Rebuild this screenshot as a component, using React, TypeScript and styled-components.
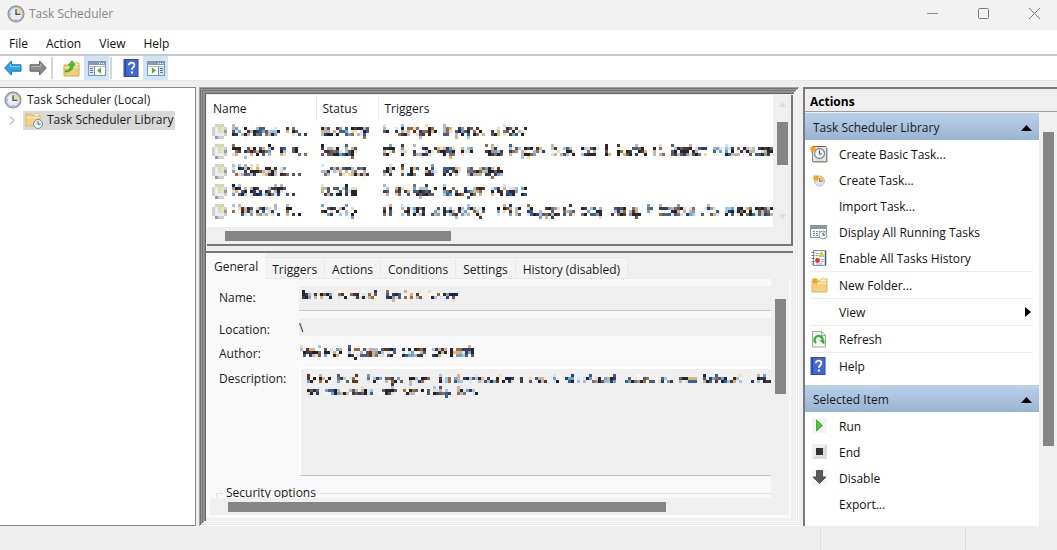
import React from "react";
import styled, { createGlobalStyle } from "styled-components";

const Global = createGlobalStyle`
  *, *::before, *::after { box-sizing: border-box; }
  html, body { margin: 0; padding: 0; overflow: hidden; }
  body, button, input, textarea {
    font-family: "Open Sans", "Noto Sans", sans-serif;
    font-size: 12px;
    line-height: 16px;
    color: #1a1a1a;
  }
`;

/* ---------- redacted text, drawn as a coarse mosaic ---------- */

const DARKS = ["#1d2433", "#3b2326", "#2c3e6e", "#5b3527", "#9a6a40", "#5d5d62", "#35609c", "#22242c"];
const LIGHTS = ["#d9b27c", "#9cc7ea", "#c9e9fb", "#f3d9b4", "#fff6dc", "#b7b7bb", "#6aa3d8", "#e9fbff"];

const noise = (a: number, b: number, seed: number) => {
  const v = Math.sin(a * 127.1 + b * 311.7 + seed * 74.7) * 43758.5453;
  return v - Math.floor(v);
};

/* shape: l = tall letter, x = low letter, g = letter with a tail, . = dot, space = gap */
function Mosaic({ shape, seed, mid = 3 }: { shape: string; seed: number; mid?: number }) {
  const cell = 3;
  const rows = mid + 2;
  const cells: React.ReactNode[] = [];
  const put = (c: number, r: number, fill: string) =>
    cells.push(<rect key={`${c}-${r}`} x={c * cell} y={r * cell} width={cell} height={cell} fill={fill} />);
  shape.split("").forEach((ch, i) => {
    if (ch === " ") return;
    for (let k = 0; k < 2; k++) {
      const c = i * 2 + k;
      for (let r = 0; r < rows; r++) {
        const n = noise(c, r, seed);
        const m = noise(r, c, seed + 9);
        if (ch === ".") {
          if (r === mid && k === 0) put(c, r, DARKS[Math.floor(m * 8)]);
          continue;
        }
        const low = r > 0 && r <= mid;
        const top = r === 0 && ch === "l" && k === 0;
        const tail = r === mid + 1 && ch === "g" && k === 0;
        if (!low && !top && !tail) continue;
        if (low && n < (k ? 0.34 : 0.12)) continue;
        const dark = low ? n > 0.58 : n > 0.75;
        put(c, r, (dark ? DARKS : LIGHTS)[Math.floor(m * 8)]);
      }
    }
  });
  return (
    <MosaicSvg width={shape.length * 2 * cell} height={rows * cell} shapeRendering="crispEdges" aria-hidden="true">
      {cells}
    </MosaicSvg>
  );
}

const MosaicSvg = styled.svg`
  display: block;
  flex: none;
`;

/* ---------- icons ---------- */

const Icon = styled.svg`
  display: block;
  flex: none;
`;

const ClockIcon = ({ size = 18 }: { size?: number }) => (
  <Icon width={size} height={size} viewBox="0 0 18 18">
    <circle cx="9" cy="9" r="8.5" fill="#85888c" />
    <circle cx="9" cy="9" r="7.600" fill="#b9bcc0" />
    <circle cx="9" cy="9" r="6" fill="#e4eef8" />
    <path d="M9 9V3a6 6 0 0 1 6 6z" fill="#f6d79a" />
    <path d="M9 4.200V9.400H13.400" fill="none" stroke="#47566b" strokeWidth="1.400" />
    <path d="M9 14v1M3 9h1" stroke="#7d8792" strokeWidth="1" />
  </Icon>
);

const ArrowIcon = ({ forward }: { forward?: boolean }) => (
  <Icon width="18" height="16" viewBox="0 0 18 16">
    <path
      d={forward ? "M17.300 8 10.600 1V4.800H1v6.400h9.600V15z" : "M.7 8 7.400 1V4.800H17v6.400H7.400V15z"}
      fill={forward ? "#8b8b8b" : "#2fa4e7"}
      stroke={forward ? "#5f5f5f" : "#1873b5"}
      strokeWidth="1"
    />
    <path d={forward ? "M2 6.500h9.500V4" : "M16 6.500H6.500V4"} fill="none" stroke={forward ? "#b5b5b5" : "#7fd0fa"} />
  </Icon>
);

const FolderUpIcon = () => (
  <Icon width="17" height="17" viewBox="0 0 17 17">
    <path d="M1 5h8l1-2h6v13H1z" fill="#f0cf7c" stroke="#d0a850" />
    <path d="M10 3.500h5.500v2h-5.500z" fill="#f9e6ae" />
    <path d="M1.500 7.500h14" stroke="#fbe9b4" />
    <path d="M2.500 10.500C6 10.500 7.500 8.500 7.500 5H5.500L9 .8 12 5h-1.700c0 4.500-3 7-7.800 7z" fill="#44c62f" stroke="#2c9a1c" strokeWidth=".7" />
  </Icon>
);

const PaneIcon = ({ right }: { right?: boolean }) => (
  <Icon width="18" height="16" viewBox="0 0 18 16">
    <rect x=".5" y="1.500" width="17" height="14" fill="#fff" stroke="#8b95a0" />
    <rect x="1" y="2" width="16" height="3" fill="#8e9aa8" />
    <path d="M11 3.500h1M13 3.500h1M15 3.500h1" stroke="#fff" />
    <path d="M1 6.500h16" stroke="#bcc5cf" />
    {right ? (
      <>
        <rect x="11.500" y="7" width="5.500" height="8" fill="#dbe6f2" />
        <path d="M11.500 6v9" stroke="#8b95a0" />
        <path d="M13 8.500h3M13 10.500h3M13 12.500h3" stroke="#4a7dbd" />
        <path d="M5 7.500v6l4-3z" fill="#3dbb2e" />
      </>
    ) : (
      <>
        <rect x="1" y="7" width="5.500" height="8" fill="#dbe6f2" />
        <path d="M6.500 6v9" stroke="#8b95a0" />
        <path d="M2 8.500h3M2 10.500h3M2 12.500h3" stroke="#4a7dbd" />
        <path d="M13 7.500v6l-4-3z" fill="#3dbb2e" />
      </>
    )}
  </Icon>
);

const HelpIcon = () => (
  <Icon width="16" height="18" viewBox="0 0 16 18">
    <rect x="1" y=".5" width="14" height="17" fill="#4468d2" stroke="#2c4bab" />
    <path d="M2.500 1v16" stroke="#294796" />
    <path d="M6 6.200c0-3.400 5.400-3.400 5.400-.2 0 2.200-2.500 2.300-2.500 4.700" fill="none" stroke="#fff" strokeWidth="1.800" />
    <rect x="7.900" y="12.500" width="2" height="2" fill="#fff" />
  </Icon>
);

const FolderClockIcon = () => (
  <Icon width="18" height="17" viewBox="0 0 18 17">
    <path d="M1 2h5l1 1.500h8V14H1z" fill="#f5d386" stroke="#dcb766" />
    <path d="M9 2h5v2H9z" fill="#fff" stroke="#d5b56e" strokeWidth=".6" />
    <path d="M1.500 5.500h13" stroke="#fdeebd" />
    <circle cx="13" cy="12" r="4.500" fill="#e8f1f8" stroke="#7e8a96" />
    <path d="M13 9.200V12.200h2.500" fill="none" stroke="#4b5c70" />
  </Icon>
);

const Star = () => (
  <path d="M4.500 0 5.600 2.400 8.500 1.500 7.300 4 9.500 5.500 7 6.300 7 9 4.800 7.300 2.500 9 2.600 6.300 0 5.400 2.200 4 1 1.500 3.600 2.400z" fill="#f7a520" />
);

const BasicTaskIcon = () => (
  <Icon width="18" height="18" viewBox="0 0 18 18">
    <path d="M2.500 1.500h13l1 1v14h-14z" fill="#e6e3e1" stroke="#8f8580" />
    <path d="M3 1.500h13" stroke="#a9483a" />
    <path d="M17 3v14H3" fill="none" stroke="#8c8c8c" />
    <circle cx="9.500" cy="8.500" r="5" fill="#eef6fb" stroke="#7f8f9b" strokeWidth="1.300" />
    <path d="M9.500 5.500V9H12" fill="none" stroke="#41566b" strokeWidth="1.200" />
    <g transform="translate(-1 0) scale(.85)"><Star /></g>
  </Icon>
);

const TaskIcon = () => (
  <Icon width="18" height="18" viewBox="0 0 18 18">
    <circle cx="9.500" cy="10" r="5" fill="#dbe8f2" stroke="#b4bfc8" />
    <path d="M9.500 10V5a5 5 0 0 1 5 5z" fill="#f4c466" />
    <path d="M9.500 7v3.300h3" fill="none" stroke="#6c7d90" />
    <g transform="translate(2 3) scale(.85)"><Star /></g>
  </Icon>
);

const RunningIcon = () => (
  <Icon width="18" height="18" viewBox="0 0 18 18">
    <rect x=".5" y="2.500" width="16" height="12" fill="#fff" stroke="#8793a0" />
    <rect x="1" y="3" width="15" height="3" fill="#8896a6" />
    <path d="M3 8.500h9M3 10.500h7M3 12.500h6" stroke="#7f90a4" strokeDasharray="2 1" />
    <circle cx="13" cy="12" r="4" fill="#edf4f7" stroke="#8c9aa5" />
    <path d="M13 12V8.500a3.500 3.500 0 0 1 3 3.500z" fill="#cfe3a4" />
    <path d="M13 9.700v2.500h2" fill="none" stroke="#4b5c70" />
  </Icon>
);

const HistoryIcon = () => (
  <Icon width="18" height="18" viewBox="0 0 18 18">
    <rect x="3.500" y="1.500" width="12" height="15" fill="#fff" stroke="#7f90b5" />
    <path d="M15.500 2v14" stroke="#3756a0" strokeWidth="1.500" />
    <path d="M1.500 3.500h3M1.500 6.500h3M1.500 9.500h3M1.500 12.500h3M1.500 15h3" stroke="#6d7580" />
    <path d="M5.500 4.500h4M5.500 6.500h3M11 10.500h3M11 12.500h3M6 15h7" stroke="#8fa9d8" />
    <path d="M11.500 2.500 14 7.500H9z" fill="#f3c81e" stroke="#d4a50d" strokeWidth=".6" />
    <circle cx="7.500" cy="11.500" r="2.400" fill="#dc3327" />
  </Icon>
);

const NewFolderIcon = () => (
  <Icon width="18" height="18" viewBox="0 0 18 18">
    <path d="M2 5h8l1-2h6v13H2z" fill="#f3d080" stroke="#dcb35e" />
    <path d="M11 3.500h5v2h-6z" fill="#fff3cf" />
    <path d="M2.500 7.500h14" stroke="#fdedb8" />
    <g transform="translate(1 1) scale(.85)"><Star /></g>
  </Icon>
);

const RefreshIcon = () => (
  <Icon width="18" height="18" viewBox="0 0 18 18">
    <path d="M2.500 1.500h9l4 3.500v12h-13z" fill="#f5f6f5" stroke="#a3a8a3" />
    <path d="M11.500 1.500v4h4" fill="none" stroke="#a3a8a3" />
    <path d="M6 13A4 4 0 1 1 12.500 11" fill="none" stroke="#2fb32c" strokeWidth="2.200" />
    <path d="M9 10.500h5.500v4z" fill="#2fb32c" />
  </Icon>
);

const RunIcon = () => (
  <Icon width="18" height="18" viewBox="0 0 18 18">
    <rect x="2" y="1" width="15" height="15" fill="#f4f4f4" />
    <path d="M6.500 3v11l6-5.500z" fill="#4cc83a" stroke="#2f9e22" strokeWidth=".8" />
  </Icon>
);

const EndIcon = () => (
  <Icon width="18" height="18" viewBox="0 0 18 18">
    <rect x="2" y="1" width="15" height="15" fill="#dcdcdc" />
    <path d="M2 1h15L2 16z" fill="#f0f0f0" />
    <rect x="6" y="5" width="7" height="7" fill="#333" />
  </Icon>
);

const DisableIcon = () => (
  <Icon width="18" height="18" viewBox="0 0 18 18">
    <rect x="2" y="1" width="15" height="15" fill="#f4f4f4" />
    <path d="M6.500 1.500h6V8H16l-6.500 6.500L3 8h3.500z" fill="#5a5a5a" stroke="#3c3c3c" strokeWidth=".8" />
  </Icon>
);

const RowClock = () => (
  <Icon width="16" height="15" viewBox="0 0 16 15" shapeRendering="crispEdges">
    <path d="M3 0h9v3h3v9h-3v3H3v-3H0V3h3z" fill="#cfcfcf" />
    <path d="M3 3h9v9H3z" fill="#eceef0" />
    <path d="M6 0h3v6H6z" fill="#c5e79a" />
    <path d="M9 3h3v6H9z" fill="#e8e6ae" />
    <path d="M12 6h3v3h-3zM3 12h3v3H3z" fill="#9a9a9a" />
    <path d="M6 6h3v3H6z" fill="#d3dae0" />
  </Icon>
);

/* ---------- window shell ---------- */

const Window = styled.div`
  display: flex;
  flex-direction: column;
  height: 100vh;
  background: #efefef;
  white-space: nowrap;
`;

const TitleBar = styled.header`
  display: flex;
  align-items: center;
  height: 30px;
  padding: 0 0 3px 7px;
  gap: 4px;
  background: #f2f2f2;
  color: #868686;
`;

const Title = styled.h1`
  flex: 1;
  margin: 0;
  font-size: 12px;
  font-weight: 400;
`;

const CaptionButton = styled.button`
  display: grid;
  place-items: center;
  width: 51px;
  height: 26px;
  padding: 0;
  border: 0;
  background: none;
`;

const Captions = styled.div`
  display: flex;
  margin-right: -3px;
`;

const MenuBar = styled.nav`
  display: flex;
  height: 26px;
  padding: 0 9px;
  gap: 18px;
  background: #fff;
  border-bottom: 2px solid #c9c9c9;
`;

const MenuButton = styled.button`
  padding: 4px 0 0;
  border: 0;
  background: none;
  color: #111;
`;

const Toolbar = styled.div`
  display: flex;
  align-items: center;
  height: 25px;
  background: #fff;
  border-bottom: 1px solid #e6e6e6;
`;

const ToolButton = styled.button<{ $on?: boolean }>`
  display: grid;
  place-items: center;
  width: 25px;
  height: 24px;
  padding: 0;
  border: 0;
  background: ${(p) => (p.$on ? "#cbe6fa" : "none")};
`;

const ToolSeparator = styled.span`
  width: 2px;
  height: 22px;
  margin: 0 6px 0 1px;
  background: #d6d6d6;
`;

const Main = styled.main`
  display: flex;
  flex: 1;
  min-height: 0;
  padding-top: 6px;
`;

/* ---------- tree ---------- */

const TreePane = styled.aside`
  flex: 0 0 196px;
  padding: 2px 0;
  background: #fff;
  border: solid #828790;
  border-width: 1px 1px 1px 0;
`;

const TreeRow = styled.div<{ $child?: boolean }>`
  display: flex;
  align-items: center;
  height: 20px;
  padding-left: ${(p) => (p.$child ? 9 : 4)}px;
  gap: 5px;
`;

const TreeItem = styled.span`
  display: flex;
  align-items: center;
  gap: 4px;
  height: 19px;
  margin-left: 3px;
  padding: 0 2px;
  background: #d9d9d9;
`;

/* ---------- centre ---------- */

const Centre = styled.section`
  display: flex;
  flex-direction: column;
  flex: 1;
  min-width: 0;
  margin-left: 3px;
  padding: 8px 6px 8px 8px;
  background: #efefef;
  box-shadow:
    inset 1px 1px #a2a2a2, inset -1px -1px #fbfbfb,
    inset 2px 2px #707070, inset -2px -2px #e6e6e6,
    inset 3px 3px #9a9a9a, inset -3px -3px #fbfbfb,
    inset 4px 4px #747474, inset -4px -4px #e9e9e9,
    inset 5px 5px #969696, inset -5px -5px #f6f6f6,
    inset 6px 6px #8a8a8a,
    inset 7px 7px #666;
`;

const ListPane = styled.div`
  flex: none;
  border: solid #777;
  border-width: 0 2px 2px 0;
  background: #efefef;
`;

const ListBody = styled.div`
  display: flex;
  height: 132px;
`;

const TableClip = styled.div`
  flex: 1;
  min-width: 0;
  overflow: hidden;
  background: #fff;
`;

const TaskTable = styled.table`
  width: 100%;
  table-layout: fixed;
  border-collapse: collapse;
  text-align: left;

  th {
    height: 26px;
    padding: 2px 0 0 6px;
    font-weight: 400;
    border-right: 1px solid #ececec;
  }
  th:last-child { border-right: 0; }
  td {
    height: 20px;
    padding: 0 0 0 5px;
    overflow: hidden;
  }
`;

const NameCell = styled.div`
  display: flex;
  align-items: center;
  gap: 4px;
  overflow: hidden;
`;

const VScroll = styled.div<{ $top: number }>`
  display: flex;
  justify-content: center;
  flex: 0 0 18px;
  padding-top: ${(p) => p.$top}px;
  position: relative;
  background: #efefef;
`;

const VThumb = styled.div<{ $h: number }>`
  width: 11px;
  height: ${(p) => p.$h}px;
  background: #858585;
`;

const ScrollHint = styled.svg<{ $end?: boolean }>`
  position: absolute;
  left: 6px;
  ${(p) => (p.$end ? "bottom: 8px;" : "top: 7px;")}
`;

const HScroll = styled.div`
  display: flex;
  align-items: center;
  flex: none;
  height: 17px;
  padding-left: 18px;
  background: #efefef;
`;

const HThumb = styled.div<{ $share: number }>`
  width: ${(p) => p.$share}%;
  height: 10px;
  background: #858585;
`;

const DetailPane = styled.div`
  display: flex;
  flex-direction: column;
  flex: 1;
  min-height: 0;
  margin: 5px 0 0 -1px;
  border-top: 2px solid #777;
`;

const Tabs = styled.div`
  display: flex;
  align-items: flex-end;
  height: 26px;
`;

const Tab = styled.button<{ $active?: boolean }>`
  height: ${(p) => (p.$active ? 26 : 22)}px;
  padding: ${(p) => (p.$active ? "2px 7px 0 8px" : "3px 7px 0")};
  border: solid #e8e8e8;
  border-width: ${(p) => (p.$active ? "0" : "1px 1px 1px 0")};
  background: ${(p) => (p.$active ? "#f9f9f9" : "#f3f3f3")};
`;

const TabPage = styled.div`
  display: flex;
  flex-direction: column;
  flex: 1;
  min-height: 0;
  margin-right: 2px;
  padding: 0 2px 3px 4px;
  background: #f9f9f9;
`;

const PageBody = styled.div`
  display: flex;
  flex: 1;
  min-height: 0;
`;

const Form = styled.div`
  flex: 1;
  min-width: 0;
  overflow: hidden;
  padding: 7px 0 0 5px;
`;

const Field = styled.div<{ $h: number }>`
  display: grid;
  grid-template-columns: 84px minmax(0, 1fr);
  align-items: start;
  min-height: ${(p) => p.$h}px;
`;

const FieldLabel = styled.label`
  padding: 4px 0 0 4px;
`;

const ValueBox = styled.div`
  position: relative;
  overflow: hidden;
`;

const Covered = styled.div<{ $x: number; $y: number }>`
  position: absolute;
  left: ${(p) => p.$x}px;
  top: ${(p) => p.$y}px;
  pointer-events: none;
`;

const TextInput = styled.input<{ $line?: boolean }>`
  display: block;
  width: 100%;
  height: ${(p) => (p.$line ? 25 : 18)}px;
  padding: 0;
  border: solid #c4c4c4;
  border-width: 0 0 ${(p) => (p.$line ? 1 : 0)}px;
  background: #efefef;
  outline: 0;
`;

const PlainInput = styled(TextInput)`
  background: transparent;
`;

const TextArea = styled.textarea`
  display: block;
  width: 100%;
  height: 109px;
  padding: 0;
  border: solid #fff;
  border-width: 2px 0 0 2px;
  border-bottom: 1px solid #c4c4c4;
  background: #efefef;
  resize: none;
  outline: 0;
`;

const Security = styled.fieldset`
  height: 40px;
  margin: 9px 0 0 1px;
  padding: 0;
  border: 1px solid #e2e2e2;
  border-right: 0;

  legend {
    margin-left: 6px;
    padding: 0 3px;
  }
`;

/* ---------- actions ---------- */

const ActionsPane = styled.aside`
  display: flex;
  flex-direction: column;
  flex: 0 0 254px;
  margin-left: 4px;
  border: solid #7b7b7b;
  border-width: 2px 0 0 2px;
  background: #efefef;
`;

const ActionsTitle = styled.h2`
  height: 23px;
  margin: 0 0 1px;
  padding: 5px 0 0 5px;
  font-size: 12px;
  line-height: 16px;
  font-weight: 700;
  color: #000;
  border-bottom: 1px solid #9c9c9c;
`;

const ActionsBody = styled.div`
  display: flex;
  flex: 1;
  min-height: 0;
`;

const ActionsList = styled.div`
  flex: 1;
  overflow: hidden;
  background: #fff;
`;

const GroupHeader = styled.button`
  display: flex;
  align-items: center;
  justify-content: space-between;
  width: 100%;
  height: 27px;
  padding: 3px 7px 0 8px;
  border: 0;
  background: linear-gradient(#b9d1ea, #99b4d1);
`;

const Group = styled.ul`
  margin: 0 0 6px;
  padding: 1px 0 0;
  list-style: none;
`;

const ActionItem = styled.li<{ $rule?: boolean }>`
  border-bottom: ${(p) => (p.$rule ? 1 : 0)}px solid #ececec;
  margin: 0 6px 0 5px;
`;

const ActionButton = styled.button`
  display: grid;
  grid-template-columns: 18px 1fr auto;
  align-items: center;
  column-gap: 11px;
  width: 100%;
  height: 26px;
  padding: 0 2px 0 0;
  border: 0;
  background: none;
  text-align: left;
  color: #111;
`;

const ActionLabel = styled.span`
  padding-top: 2px;
`;

/* ---------- status bar ---------- */

const StatusBar = styled.footer`
  display: flex;
  justify-content: flex-end;
  flex: none;
  height: 24px;
  padding-top: 2px;
  background: #eee;
`;

const StatusCell = styled.span<{ $w: number }>`
  width: ${(p) => p.$w}px;
  border-left: 1px solid #dedede;
`;

const TASKS = [
  { name: "lxgxxxxx xx..", status: "lxxxxxxg", trigger: "l xlllglx lxgxgxx xxlxxx", w: 1 },
  { name: "lxgxxxl x x..", status: "lxxxlg", trigger: "xl l lxxxxxg xx  llx lxggxx lxxx xxx l lxxlx xl lxxlxx xxlxxxxxxx", w: 2 },
  { name: "lllllxxlx...", status: "lxxxxxxg", trigger: "xl lxx xl xxx xxxxgx", w: 3 },
  { name: "llxxxxxll..", status: "lxxxlg", trigger: "l xlllglx lxgxgxx xxlxxx", w: 4 },
  { name: "llxxxxxl l..", status: "lxxxlg", trigger: "xl llxl xxxxgxlxg  xllx lxgggxxl xxxg xxxxg l lxxlxx xlx xxxxxxxxx", w: 5 },
];

const LIBRARY_ACTIONS: { label: string; icon?: React.ReactNode; rule?: boolean; sub?: boolean }[] = [
  { label: "Create Basic Task...", icon: <BasicTaskIcon /> },
  { label: "Create Task...", icon: <TaskIcon /> },
  { label: "Import Task..." },
  { label: "Display All Running Tasks", icon: <RunningIcon /> },
  { label: "Enable All Tasks History", icon: <HistoryIcon />, rule: true },
  { label: "New Folder...", icon: <NewFolderIcon />, rule: true },
  { label: "View", rule: true, sub: true },
  { label: "Refresh", icon: <RefreshIcon />, rule: true },
  { label: "Help", icon: <HelpIcon /> },
];

const ITEM_ACTIONS = [
  { label: "Run", icon: <RunIcon /> },
  { label: "End", icon: <EndIcon /> },
  { label: "Disable", icon: <DisableIcon /> },
  { label: "Export..." },
];

const Collapse = () => (
  <Icon width="11" height="6" viewBox="0 0 11 6"><path d="M5.500 0 11 6H0z" fill="#000" /></Icon>
);

function ActionGroup({ title, items }: { title: string; items: typeof LIBRARY_ACTIONS }) {
  return (
    <>
      <GroupHeader>{title}<Collapse /></GroupHeader>
      <Group>
        {items.map((a) => (
          <ActionItem key={a.label} $rule={a.rule}>
            <ActionButton>
              {a.icon ?? <span />}
              <ActionLabel>{a.label}</ActionLabel>
              {a.sub && <Icon width="6" height="10" viewBox="0 0 6 10"><path d="M0 0 6 5 0 10z" fill="#000" /></Icon>}
            </ActionButton>
          </ActionItem>
        ))}
      </Group>
    </>
  );
}

export default function App() {
  return (
    <Window>
      <Global />
      <TitleBar>
        <ClockIcon />
        <Title>Task Scheduler</Title>
        <Captions>
          <CaptionButton aria-label="Minimize">
            <Icon width="11" height="11"><path d="M0 5.500h11" stroke="#8c8c8c" /></Icon>
          </CaptionButton>
          <CaptionButton aria-label="Maximize">
            <Icon width="11" height="11"><rect x=".5" y=".5" width="10" height="10" rx="1" fill="none" stroke="#7c7c7c" /></Icon>
          </CaptionButton>
          <CaptionButton aria-label="Close">
            <Icon width="11" height="11"><path d="M0 0 11 11M11 0 0 11" stroke="#7c7c7c" /></Icon>
          </CaptionButton>
        </Captions>
      </TitleBar>
      <MenuBar>
        {["File", "Action", "View", "Help"].map((m) => <MenuButton key={m}>{m}</MenuButton>)}
      </MenuBar>
      <Toolbar>
        <ToolButton aria-label="Back"><ArrowIcon /></ToolButton>
        <ToolButton aria-label="Forward"><ArrowIcon forward /></ToolButton>
        <ToolSeparator />
        <ToolButton aria-label="Up one level"><FolderUpIcon /></ToolButton>
        <ToolButton $on aria-label="Show console tree"><PaneIcon /></ToolButton>
        <ToolSeparator />
        <ToolButton aria-label="Help"><HelpIcon /></ToolButton>
        <ToolButton $on aria-label="Show action pane"><PaneIcon right /></ToolButton>
      </Toolbar>

      <Main>
        <TreePane>
          <TreeRow><ClockIcon /><span>Task Scheduler (Local)</span></TreeRow>
          <TreeRow $child>
            <Icon width="6" height="9" viewBox="0 0 6 9"><path d="M1 .5 5 4.500 1 8.500" fill="none" stroke="#8a8a8a" /></Icon>
            <TreeItem><FolderClockIcon />Task Scheduler Library</TreeItem>
          </TreeRow>
        </TreePane>

        <Centre>
          <ListPane>
            <ListBody>
              <TableClip>
                <TaskTable>
                  <colgroup>
                    <col width="109" />
                    <col width="62" />
                    <col />
                  </colgroup>
                  <thead>
                    <tr><th>Name</th><th>Status</th><th>Triggers</th></tr>
                  </thead>
                  <tbody>
                    {TASKS.map((t) => (
                      <tr key={t.w}>
                        <td><NameCell><RowClock /><Mosaic shape={t.name} seed={t.w} /></NameCell></td>
                        <td><Mosaic shape={t.status} seed={t.w + 20} /></td>
                        <td><Mosaic shape={t.trigger} seed={t.w + 40} /></td>
                      </tr>
                    ))}
                  </tbody>
                </TaskTable>
              </TableClip>
              <VScroll $top={27}>
                <ScrollHint width="7" height="5"><path d="M3.500 0 7 5H0z" fill="#dcdcdc" /></ScrollHint>
                <VThumb $h={43} />
                <ScrollHint $end width="7" height="5"><path d="M3.500 5 7 0H0z" fill="#dcdcdc" /></ScrollHint>
              </VScroll>
            </ListBody>
            <HScroll><HThumb $share={40} /></HScroll>
          </ListPane>

          <DetailPane>
            <Tabs role="tablist">
              <Tab role="tab" $active>General</Tab>
              {["Triggers", "Actions", "Conditions", "Settings", "History (disabled)"].map((t) => (
                <Tab role="tab" key={t}>{t}</Tab>
              ))}
            </Tabs>
            <TabPage>
              <PageBody>
                <Form>
                  <Field $h={32}>
                    <FieldLabel htmlFor="name">Name:</FieldLabel>
                    <ValueBox>
                      <TextInput id="name" $line readOnly />
                      <Covered $x={3} $y={4}><Mosaic shape="lxxlx lxxxlxl lgxlxx lxxlg" seed={71} mid={2} /></Covered>
                    </ValueBox>
                  </Field>
                  <Field $h={24}>
                    <FieldLabel htmlFor="location">Location:</FieldLabel>
                    <TextInput id="location" readOnly defaultValue={"\\"} />
                  </Field>
                  <Field $h={25}>
                    <FieldLabel htmlFor="author">Author:</FieldLabel>
                    <ValueBox>
                      <PlainInput id="author" readOnly />
                      <Covered $x={1} $y={3}><Mosaic shape="lxxlxxx lgxxxxxx lxxx xxgxxxl" seed={83} mid={3} /></Covered>
                    </ValueBox>
                  </Field>
                  <Field $h={109}>
                    <FieldLabel htmlFor="description">Description:</FieldLabel>
                    <ValueBox>
                      <TextArea id="description" readOnly />
                      <Covered $x={8} $y={7}>
                        <Mosaic shape="lllx lxxl lxxxgx gxxx lxxlxxlxxxlxxx xxx lxxlxxlxxxl xxlxxxxx xxx lxlxxxl xllx lxx" seed={91} mid={2} />
                        <Mosaic shape="xx xxxxxxlx xxl xxxxxllg lxxx" seed={95} mid={2} />
                      </Covered>
                    </ValueBox>
                  </Field>
                  <Security><legend>Security options</legend></Security>
                </Form>
                <VScroll $top={20}><VThumb $h={95} /></VScroll>
              </PageBody>
              <HScroll><HThumb $share={78} /></HScroll>
            </TabPage>
          </DetailPane>
        </Centre>

        <ActionsPane>
          <ActionsTitle>Actions</ActionsTitle>
          <ActionsBody>
            <ActionsList>
              <ActionGroup title="Task Scheduler Library" items={LIBRARY_ACTIONS} />
              <ActionGroup title="Selected Item" items={ITEM_ACTIONS} />
            </ActionsList>
            <VScroll $top={19}><VThumb $h={314} /></VScroll>
          </ActionsBody>
        </ActionsPane>
      </Main>

      <StatusBar>
        <StatusCell $w={145} />
        <StatusCell $w={92} />
      </StatusBar>
    </Window>
  );
}
